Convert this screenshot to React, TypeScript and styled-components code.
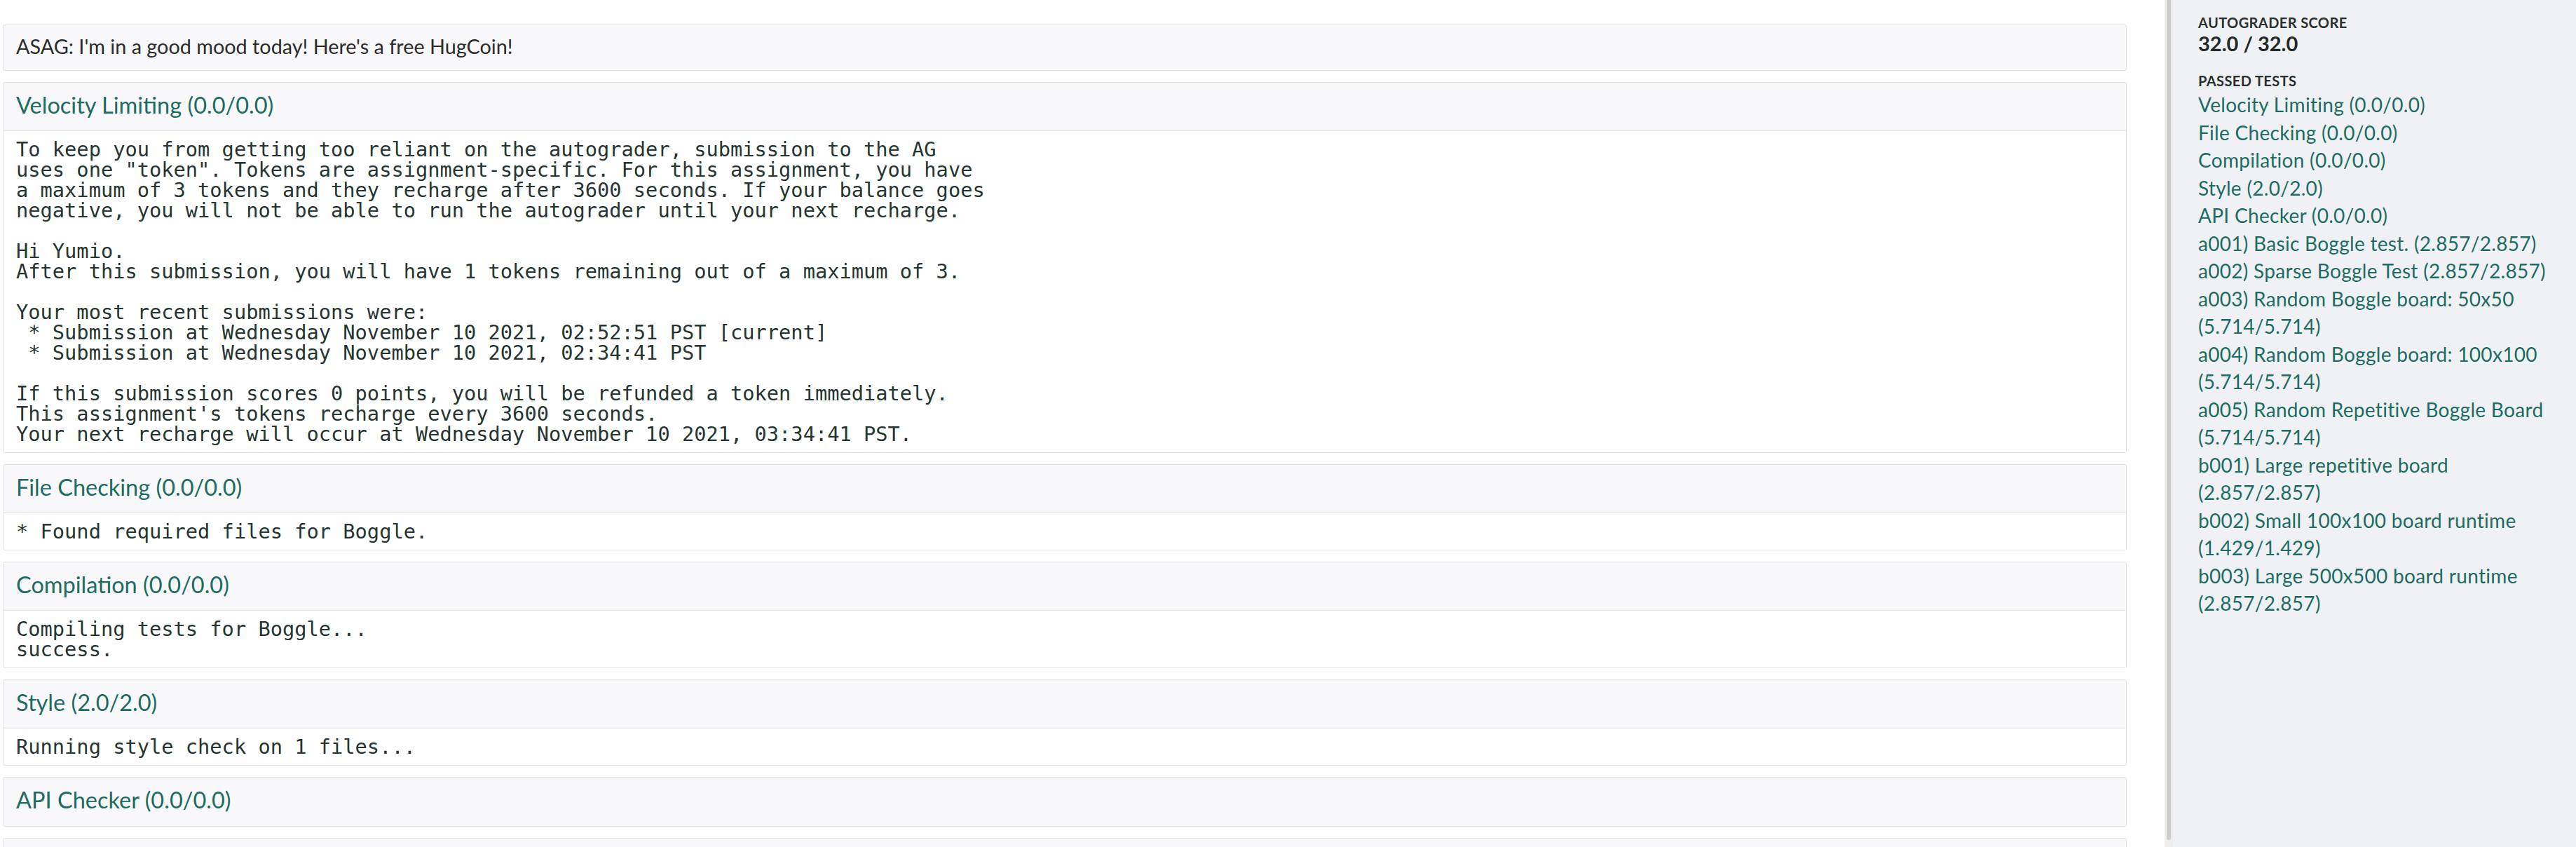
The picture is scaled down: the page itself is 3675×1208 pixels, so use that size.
import React from "react";
import styled, { createGlobalStyle } from "styled-components";

const GlobalStyle = createGlobalStyle`
  html, body {
    margin: 0;
    padding: 0;
    background: #ffffff;
  }
  body {
    font-family: "Lato", "Open Sans", sans-serif;
    color: #2b2b2b;
  }
  * {
    box-sizing: border-box;
  }
`;

type TestResult = {
  name: string;
  score: string;
  output?: string;
};

const velocityText = `To keep you from getting too reliant on the autograder, submission to the AG
uses one "token". Tokens are assignment-specific. For this assignment, you have
a maximum of 3 tokens and they recharge after 3600 seconds. If your balance goes
negative, you will not be able to run the autograder until your next recharge.

Hi Yumio.
After this submission, you will have 1 tokens remaining out of a maximum of 3.

Your most recent submissions were:
 * Submission at Wednesday November 10 2021, 02:52:51 PST [current]
 * Submission at Wednesday November 10 2021, 02:34:41 PST

If this submission scores 0 points, you will be refunded a token immediately.
This assignment's tokens recharge every 3600 seconds.
Your next recharge will occur at Wednesday November 10 2021, 03:34:41 PST.`;

const results: TestResult[] = [
  { name: "Velocity Limiting", score: "0.0/0.0", output: velocityText },
  {
    name: "File Checking",
    score: "0.0/0.0",
    output: "* Found required files for Boggle.",
  },
  {
    name: "Compilation",
    score: "0.0/0.0",
    output: "Compiling tests for Boggle...\nsuccess.",
  },
  {
    name: "Style",
    score: "2.0/2.0",
    output: "Running style check on 1 files...",
  },
  { name: "API Checker", score: "0.0/0.0" },
  { name: "a001) Basic Boggle test.", score: "2.857/2.857" },
];

const passed: TestResult[] = [
  { name: "Velocity Limiting", score: "0.0/0.0" },
  { name: "File Checking", score: "0.0/0.0" },
  { name: "Compilation", score: "0.0/0.0" },
  { name: "Style", score: "2.0/2.0" },
  { name: "API Checker", score: "0.0/0.0" },
  { name: "a001) Basic Boggle test.", score: "2.857/2.857" },
  { name: "a002) Sparse Boggle Test", score: "2.857/2.857" },
  { name: "a003) Random Boggle board: 50x50", score: "5.714/5.714" },
  { name: "a004) Random Boggle board: 100x100", score: "5.714/5.714" },
  { name: "a005) Random Repetitive Boggle Board", score: "5.714/5.714" },
  { name: "b001) Large repetitive board", score: "2.857/2.857" },
  { name: "b002) Small 100x100 board runtime", score: "1.429/1.429" },
  { name: "b003) Large 500x500 board runtime", score: "2.857/2.857" },
];

const TestCard = ({ result }: { result: TestResult }) => (
  <Card>
    <CardHeader $last={!result.output}>
      <CardTitle>
        {result.name} ({result.score})
      </CardTitle>
    </CardHeader>
    {result.output && <Output>{result.output}</Output>}
  </Card>
);

const App = () => {
  return (
    <>
      <GlobalStyle />
      <Page>
        <Main>
          <Notice>ASAG: I'm in a good mood today! Here's a free HugCoin!</Notice>
          {results.map((r) => (
            <TestCard key={r.name} result={r} />
          ))}
        </Main>
        <ScrollTrack>
          <ScrollThumb />
        </ScrollTrack>
        <Sidebar>
          <SectionLabel>Autograder Score</SectionLabel>
          <Score>32.0 / 32.0</Score>
          <SectionLabel $gap>Passed Tests</SectionLabel>
          <TestList>
            {passed.map((t) => (
              <TestLink key={t.name}>
                {t.name} ({t.score})
              </TestLink>
            ))}
          </TestList>
        </Sidebar>
      </Page>
    </>
  );
};

export default App;

const Page = styled.div`
  display: flex;
  height: 100vh;
  overflow: hidden;
`;

const Main = styled.main`
  flex: 1;
  min-width: 0;
  display: flex;
  flex-direction: column;
  gap: 16px;
  padding: 35px 54px 0 4px;
  overflow: hidden;
`;

const Notice = styled.div`
  flex-shrink: 0;
  display: flex;
  align-items: center;
  height: 66px;
  padding: 0 18px 4px;
  background: #f8f8fa;
  border: 1px solid #e1e2e8;
  border-radius: 3px;
  font-size: 28.8px;
  color: #2b2b2b;
`;

const Card = styled.section`
  flex-shrink: 0;
  border: 1px solid #e1e2e8;
  border-radius: 3px;
  background: #ffffff;
`;

const CardHeader = styled.div<{ $last?: boolean }>`
  display: flex;
  align-items: center;
  height: 69px;
  padding: 0 18px 6px;
  background: #f8f8fa;
  border-bottom: ${(p) => (p.$last ? "none" : "1px solid #e1e2e8")};
  border-radius: 3px 3px 0 0;
`;

const CardTitle = styled.h3`
  margin: 0;
  font-size: 32.5px;
  font-weight: 400;
  color: #1d6c64;
`;

const Output = styled.pre`
  margin: 0;
  padding: 11.5px 18px;
  font-family: "DejaVu Sans Mono", "Liberation Mono", monospace;
  font-size: 28.7px;
  line-height: 29px;
  color: #253532;
  white-space: pre;
`;

const ScrollTrack = styled.div`
  flex-shrink: 0;
  width: 12px;
  padding-left: 3px;
  background: #efedeb;
`;

const ScrollThumb = styled.div`
  width: 6px;
  height: 1198px;
  background: #cdcdcd;
  border-radius: 0 0 3px 3px;
`;

const Sidebar = styled.aside`
  flex-shrink: 0;
  width: 575px;
  padding: 20px 27px 0 36px;
  background: #eff1f4;
`;

const SectionLabel = styled.div<{ $gap?: boolean }>`
  margin-top: ${(p) => (p.$gap ? "24px" : "0")};
  font-size: 20px;
  line-height: 24px;
  font-weight: 700;
  letter-spacing: 0.4px;
  text-transform: uppercase;
  color: #2a302e;
`;

const Score = styled.div`
  font-size: 29px;
  line-height: 35px;
  font-weight: 700;
  color: #222826;
`;

const TestList = styled.div`
  display: flex;
  flex-direction: column;
  margin-top: 3px;
`;

const TestLink = styled.a`
  font-size: 28px;
  line-height: 39.5px;
  letter-spacing: 0.3px;
  color: #1d6c64;
  text-decoration: none;
  cursor: pointer;
`;
